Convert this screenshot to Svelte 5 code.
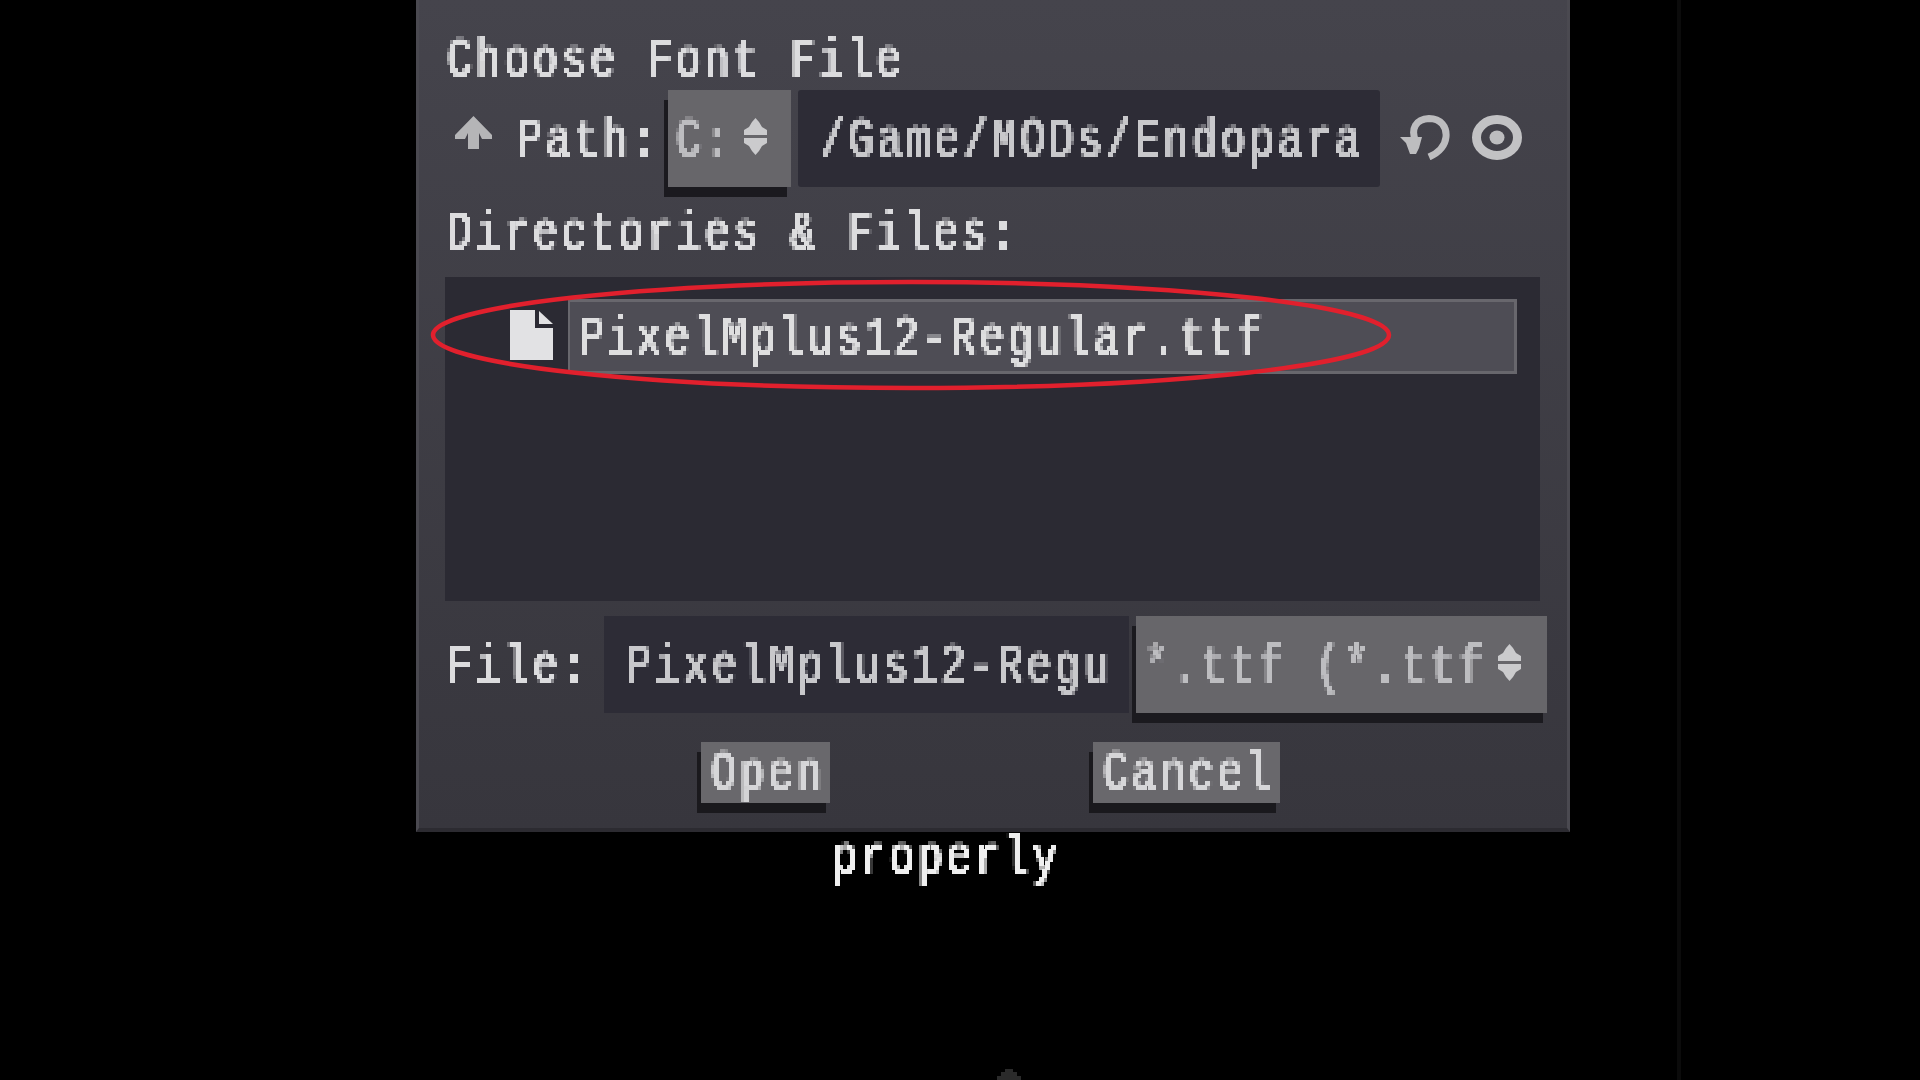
<script>
    const advance = 28.6;
</script>

{#snippet pix(text)}
    <span class="pix" style="width: {text.length * advance}px"><span>{text}</span></span>
{/snippet}

{#snippet updown()}
    <svg class="updown" viewBox="0 0 23 37" width="23" height="37">
        <polygon points="11.5,0 15,4 18,9 23,12 23,17 0,17 0,12 5,9 8,4" />
        <polygon points="0,20 23,20 23,25 18,28 15,33 11.5,37 8,33 5,28 0,25" />
    </svg>
{/snippet}

<svg class="defs" width="0" height="0">
    <!-- samples the text on a coarse grid, the bitmap font look of the game UI -->
    <filter id="pixelate" x="0" y="-0.3" width="1" height="1.6" color-interpolation-filters="sRGB">
        <feFlood x="1.700" y="2" width="1" height="1" />
        <feComposite width="5" height="4" />
        <feTile result="grid" />
        <feComposite in="SourceGraphic" in2="grid" operator="in" />
        <feMorphology operator="dilate" radius="2" />
    </filter>
</svg>

<div class="screen">
    <div class="panel">
        <div class="title">{@render pix('Choose Font File')}</div>

        <div class="row path-row">
            <svg class="up" viewBox="0 0 37 33" width="37" height="33">
                <polygon points="18.5,0 37,19 37,23 27,23 24,17 24,33 13,33 13,17 10,23 0,23 0,19" />
            </svg>
            <div class="path-label">{@render pix('Path:')}</div>
            <div class="select drive">
                {@render pix('C:')}
                {@render updown()}
            </div>
            <div class="input path-input">{@render pix('/Game/MODs/Endopara')}</div>
            <svg class="undo" viewBox="0 0 52 45" width="52" height="45">
                <path d="M16 27 C10 14 16 4 29 3.500 C41 3.500 47 12 46 22 C45 32 38 38 29 42" />
                <polygon points="0,22 22,22 19,33 16,39 10,39 6,28" />
            </svg>
            <svg class="eye" viewBox="0 0 50 45" width="50" height="45">
                <ellipse class="outer" cx="25" cy="22.500" rx="20.500" ry="18" />
                <ellipse class="pupil" cx="25" cy="22.500" rx="7.500" ry="7" />
            </svg>
        </div>

        <div class="title dirs">{@render pix('Directories & Files:')}</div>

        <div class="list">
            <svg class="file" viewBox="0 0 43 50" width="43" height="50">
                <path d="M0 0 H25 V18 H43 V50 H0 Z" />
                <polygon points="29,1 43,14 29,14" />
            </svg>
            <div class="item">{@render pix('PixelMplus12-Regular.ttf')}</div>
        </div>

        <div class="row file-row">
            <div class="file-label">{@render pix('File:')}</div>
            <div class="input name-input">{@render pix('PixelMplus12-Regu')}</div>
            <div class="select filter">
                {@render pix('*.ttf (*.ttf')}
                {@render updown()}
            </div>
        </div>

        <div class="buttons">
            <button class="open">{@render pix('Open')}</button>
            <button class="cancel">{@render pix('Cancel')}</button>
        </div>

        <svg class="ring" viewBox="0 0 966 114" width="966" height="114">
            <ellipse cx="483" cy="57" rx="478" ry="53" />
        </svg>
    </div>

    <div class="caption">{@render pix('properly')}</div>

    <div class="edge"></div>
    <svg class="blob" viewBox="0 0 24 11" width="24" height="11">
        <polygon points="8,0 16,0 16,3 20,3 20,7 24,7 24,11 0,11 0,7 4,7 4,3 8,3" />
    </svg>
</div>

<style>
    :global(body) {
        background: #000;
    }

    .defs {
        position: absolute;
    }

    .screen {
        position: relative;
        width: 1920px;
        height: 1080px;
        box-sizing: border-box;
        padding-left: 416px;
        background: #000;
        overflow: hidden;
        font-family: "Liberation Mono", monospace;
        font-size: 55px;
        line-height: 44px;
        color: #dcdcde;
    }

    .pix {
        display: block;
        flex: none;
        white-space: pre;
    }

    .pix > span {
        display: inline-block;
        letter-spacing: 4.630px;
        transform: translate(2px, 2px) scaleX(0.76);
        transform-origin: 0 50%;
        filter: url(#pixelate);
    }

    .panel {
        position: relative;
        width: 1154px;
        height: 832px;
        box-sizing: border-box;
        padding: 38px 0 0 26px;
        background: linear-gradient(#45444c, #37363d);
        border-left: 3px solid #4a4950;
        border-right: 3px solid #4a4950;
        border-bottom: 4px solid #2c2b31;
    }

    .title {
        height: 44px;
    }

    .dirs {
        margin-top: 24px;
    }

    .row {
        display: flex;
        align-items: center;
        height: 97px;
    }

    .path-row {
        margin-top: 8px;
    }

    .up {
        flex: none;
        margin: -12px 0 0 10px;
        fill: #b5b5b7;
    }

    .path-label {
        margin: 2px 10px 0 23px;
    }

    .select {
        display: flex;
        align-items: center;
        flex: none;
        box-sizing: border-box;
        height: 97px;
        padding-top: 2px;
        background: #67666a;
        box-shadow: -4px 10px 0 #1b1a1f;
        color: #bdbdc0;
    }

    .drive {
        width: 123px;
        padding-left: 6px;
    }

    .updown {
        flex: none;
        margin: -6px 0 0 13px;
        fill: #cbcbcd;
    }

    .input {
        display: flex;
        align-items: center;
        flex: none;
        box-sizing: border-box;
        height: 97px;
        padding: 2px 0 0 20px;
        background: #2d2c36;
        color: #c8c8cb;
        overflow: hidden;
    }

    .path-input {
        width: 582px;
        margin-left: 7px;
        border-radius: 3px;
    }

    .undo {
        flex: none;
        margin: -2px 0 0 20px;
    }

    .undo path {
        fill: none;
        stroke: #bdbdbf;
        stroke-width: 7;
    }

    .undo polygon {
        fill: #bdbdbf;
    }

    .eye {
        flex: none;
        margin: -2px 0 0 20px;
    }

    .outer {
        fill: none;
        stroke: #c2c2c4;
        stroke-width: 9;
    }

    .pupil {
        fill: #bdbdbf;
    }

    .list {
        display: flex;
        align-items: flex-start;
        width: 1095px;
        height: 324px;
        box-sizing: border-box;
        margin-top: 22px;
        padding: 22px 0 0 65px;
        background: #2b2a33;
    }

    .file {
        flex: none;
        margin: 11px 15px 0 0;
        fill: #e2e2e4;
    }

    .item {
        display: flex;
        align-items: center;
        flex: none;
        width: 949px;
        height: 75px;
        box-sizing: border-box;
        padding: 3px 0 0 7px;
        background: #4e4d55;
        border: solid #68676d;
        border-width: 3px 3px 3px 2px;
        color: #dededf;
    }

    .file-row {
        margin-top: 15px;
    }

    .file-label {
        margin: 2px 0 0 0;
    }

    .name-input {
        width: 525px;
        margin-left: 16px;
    }

    .filter {
        width: 411px;
        margin-left: 7px;
        padding-left: 6px;
    }

    .filter .updown {
        margin-left: 13px;
    }

    .buttons {
        display: flex;
        margin-top: 29px;
        padding-left: 256px;
    }

    button {
        display: flex;
        align-items: center;
        box-sizing: border-box;
        height: 61px;
        border: 0;
        padding: 1px 0 0 8px;
        background: #69686c;
        box-shadow: -4px 10px 0 #1a191d;
        color: #d6d6d8;
        font: inherit;
    }

    .open {
        width: 129px;
    }

    .cancel {
        width: 187px;
        margin-left: 263px;
    }

    .ring {
        position: absolute;
        left: 9px;
        top: 278px;
        fill: none;
        stroke: #e1202d;
        stroke-width: 4.500;
    }

    .caption {
        margin: 3px 0 0 414px;
        color: #efefef;
    }

    .edge {
        position: absolute;
        left: 1677px;
        top: 0;
        bottom: 0;
        width: 4px;
        background: #0b0b0b;
    }

    .blob {
        position: absolute;
        left: 997px;
        bottom: 0;
        fill: #2a2a2a;
    }
</style>
